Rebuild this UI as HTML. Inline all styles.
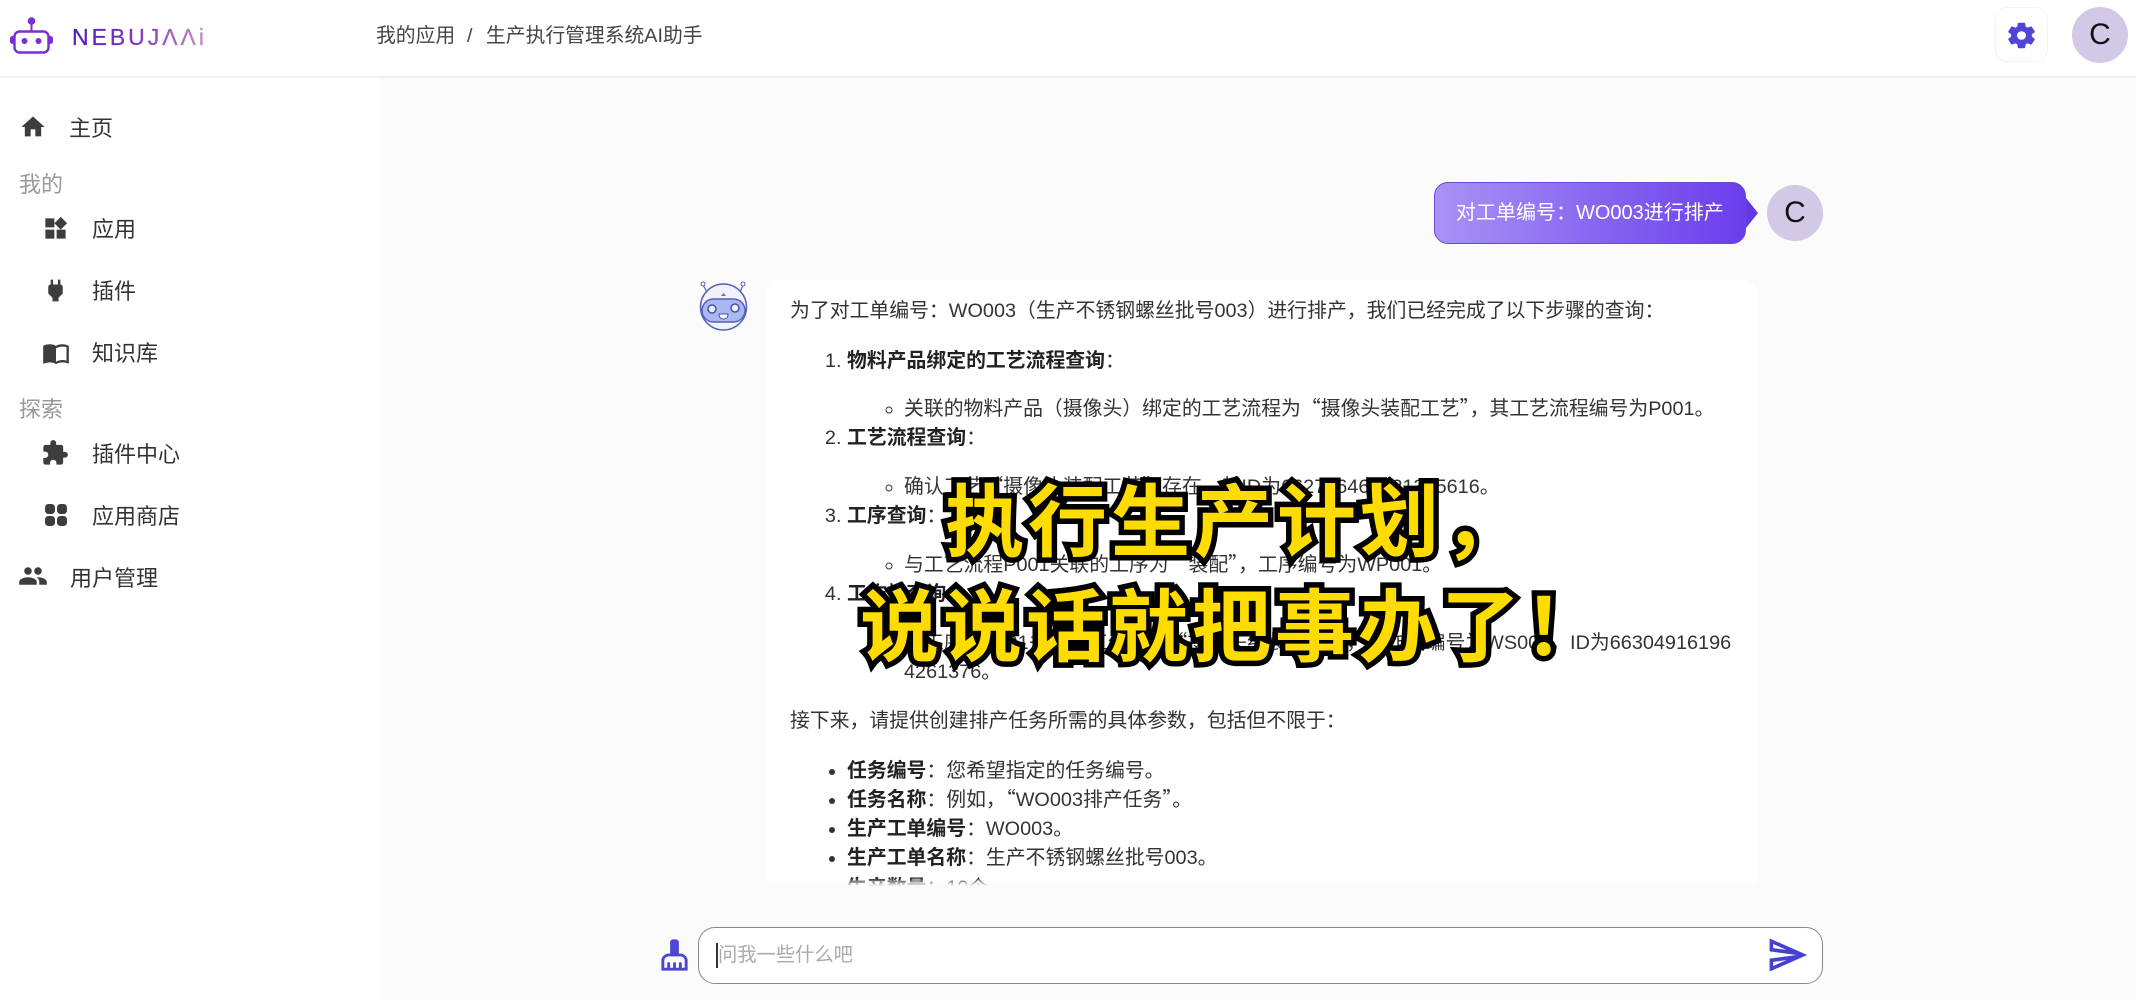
<!DOCTYPE html>
<html lang="zh-CN"><head><meta charset="utf-8"><title>生产执行管理系统AI助手</title>
<style>
*{box-sizing:border-box}
html,body{margin:0;width:2136px;height:1000px;overflow:hidden;background:#fff;font-family:"Liberation Sans","Noto Sans CJK SC",sans-serif;color:#333}
.abs{position:absolute}
#main{position:absolute;left:380px;top:77px;width:1756px;height:923px;background:#fbfbfb}
header{position:absolute;left:0;top:0;width:2136px;height:78px;background:#fff;border-bottom:2px solid #f0f0f0}
.crumb{position:absolute;top:21px;font-size:19.8px;line-height:30px;color:#444;white-space:nowrap}
.nav{position:absolute;font-size:22px;line-height:32px;color:#333;white-space:nowrap}
.cap{color:#999}
.ic{position:absolute;fill:#3d3d3d}
.set{position:absolute;left:1995px;top:7px;width:53px;height:55px;background:#fff;border:1px solid #f3f3f3;border-radius:12px}
.av{position:absolute;width:56px;height:56px;border-radius:50%;background:#d1c9e5;color:#111;font-size:30px;line-height:56px;text-align:center}
.bubble{position:absolute;left:1434px;top:182px;width:312px;height:62px;border-radius:14px;background:linear-gradient(90deg,#a893f6,#6a3deb);border:1px solid #6a4bd0;color:#fff;font-size:20px;line-height:60px;padding-left:21px;white-space:nowrap}
.tip{position:absolute;left:1746px;top:198px;width:0;height:0;border-left:12px solid #6238e0;border-top:15px solid transparent;border-bottom:15px solid transparent}
.card{position:absolute;left:766px;top:280px;width:991px;height:640px;background:#fff;border-radius:14px 14px 0 0;overflow:hidden;padding:17px 15px 0 24px;font-size:19.85px;line-height:29.3px;color:#333}
.card p{margin:0 0 20.4px}
.card ol,.card ul{margin:0;padding-left:57px}
.card ol{margin-bottom:19.8px}
.card ol ul{margin:19.2px 0 0;list-style:circle}
.card>ul{list-style:disc}
.card strong{font-weight:700;color:#222}
.q{font-family:"Noto Sans CJK SC",sans-serif;line-height:0}
.fade{position:absolute;left:380px;top:878px;width:1756px;height:122px;background:linear-gradient(#fbfbfb00,#fbfbfb 8px)}
.input{position:absolute;left:698px;top:927px;width:1125px;height:57px;background:#fff;border:1.5px solid #888;border-radius:17px}
.ph{position:absolute;left:718px;top:941px;font-size:19.3px;line-height:30px;color:#aaa;white-space:nowrap}
.caret{position:absolute;left:716px;top:943px;width:2px;height:25px;background:#333}
.sub{position:absolute;white-space:nowrap;font-family:"Noto Sans CJK SC",sans-serif;font-weight:700;color:#ffdc00;-webkit-text-stroke:11px #000;paint-order:stroke fill;font-size:79px;line-height:90px;letter-spacing:4px}
</style></head><body>
<div id="main"></div>
<header>
<svg class="abs" style="left:9px;top:16px" width="46" height="38" viewBox="0 0 46 38"><g fill="#7a2fd2"><circle cx="22.500" cy="5" r="3.800"/><rect x="21.500" y="6" width="2" height="10"/><rect x="1" y="20" width="5" height="8" rx="2.500"/><rect x="39" y="20" width="5" height="8" rx="2.500"/><circle cx="15.500" cy="25" r="3"/><circle cx="29.500" cy="25" r="3"/></g><rect x="5.500" y="15.500" width="34" height="21" rx="5" fill="none" stroke="#7a2fd2" stroke-width="2.400"/></svg>
<svg class="abs" style="left:70px;top:24px" width="140" height="28" viewBox="0 0 140 28"><defs><linearGradient id="lg"><stop offset="0" stop-color="#4b1fc0"/><stop offset=".55" stop-color="#8a3bc0"/><stop offset="1" stop-color="#c58abf"/></linearGradient></defs><text x="2" y="21" font-family="Liberation Sans" font-size="23" fill="url(#lg)" stroke="url(#lg)" stroke-width=".25" textLength="132" lengthAdjust="spacing">NEBUJΛΛi</text></svg>
<div class="crumb" style="left:376px">我的应用</div><div class="crumb" style="left:467px">/</div><div class="crumb" style="left:486px">生产执行管理系统AI助手</div>
<div class="set"></div>
<svg class="abs" style="left:2004.500px;top:19.500px" width="33" height="31" viewBox="0 0 24 24" preserveAspectRatio="none" fill="#4f46d8" stroke="#4f46d8" stroke-width=".6"><path d="M19.14 12.94c.04-.3.06-.61.06-.94 0-.32-.02-.64-.07-.94l2.03-1.58c.18-.14.23-.41.12-.61l-1.92-3.32c-.12-.22-.37-.29-.59-.22l-2.39.96c-.5-.38-1.03-.7-1.62-.94l-.36-2.54c-.04-.24-.24-.41-.48-.41h-3.84c-.24 0-.43.17-.47.41l-.36 2.54c-.59.24-1.13.57-1.62.94l-2.39-.96c-.22-.08-.47 0-.59.22L2.74 8.87c-.12.21-.08.47.12.61l2.03 1.58c-.05.3-.09.63-.09.94s.02.64.07.94l-2.03 1.58c-.18.14-.23.41-.12.61l1.92 3.32c.12.22.37.29.59.22l2.39-.96c.5.38 1.03.7 1.62.94l.36 2.54c.05.24.24.41.48.41h3.84c.24 0 .44-.17.47-.41l.36-2.54c.59-.24 1.13-.56 1.62-.94l2.39.96c.22.08.47 0 .59-.22l1.92-3.32c.12-.22.07-.47-.12-.61l-2.01-1.58zM12 15.6c-1.98 0-3.6-1.62-3.6-3.6s1.62-3.6 3.6-3.6 3.6 1.62 3.6 3.6-1.62 3.6-3.6 3.6z"/></svg>
<div class="av" style="left:2072px;top:7px">C</div>
</header>

<svg class="ic" style="left:19px;top:113px" width="28" height="28" viewBox="0 0 24 24"><path d="M10 20v-6h4v6h5v-8h3L12 3 2 12h3v8z"/></svg>
<div class="nav" style="left:69px;top:113px">主页</div>
<div class="nav cap" style="left:19px;top:169px">我的</div>
<svg class="ic" style="left:42px;top:215px" width="27" height="27" viewBox="0 0 24 24"><path d="M13 13v8h8v-8h-8zM3 21h8v-8H3v8zM3 3v8h8V3H3zm13.66-1.31L11 7.34 16.66 13l5.66-5.66-5.66-5.65z"/></svg>
<div class="nav" style="left:92px;top:214px">应用</div>
<svg class="ic" style="left:39px;top:276px" width="33" height="29" viewBox="0 0 24 24"><path d="M16.010 7L16 3h-2v4h-4V3H8v4h-.01C7 6.990 6 7.990 6 8.990v5.490L9.500 18v3h5v-3l3.500-3.510v-5.500c0-1-1-2-1.990-1.990z"/></svg>
<div class="nav" style="left:92px;top:276px">插件</div>
<svg class="ic" style="left:42px;top:339px" width="28" height="28" viewBox="0 0 24 24"><path d="M21 5c-1.110-.35-2.330-.5-3.500-.5-1.950 0-4.050.4-5.500 1.500-1.450-1.100-3.550-1.500-5.500-1.500S2.450 4.900 1 6v14.650c0 .25.25.5.5.5.1 0 .15-.05.25-.05C3.100 20.450 5.050 20 6.500 20c1.950 0 4.050.4 5.500 1.500 1.350-.85 3.800-1.500 5.500-1.500 1.650 0 3.350.3 4.750 1.050.1.05.15.05.25.05.25 0 .5-.25.5-.5V6c-.6-.45-1.250-.75-2-1zm0 13.500c-1.100-.35-2.300-.5-3.500-.5-1.700 0-4.150.65-5.500 1.500V8c1.350-.85 3.800-1.500 5.500-1.500 1.200 0 2.400.15 3.500.5v11.500z"/></svg>
<div class="nav" style="left:92px;top:338px">知识库</div>
<div class="nav cap" style="left:19px;top:394px">探索</div>
<svg class="ic" style="left:41px;top:439px" width="28" height="28" viewBox="0 0 24 24"><path d="M20.500 11H19V7c0-1.100-.9-2-2-2h-4V3.500C13 2.120 11.880 1 10.500 1S8 2.120 8 3.500V5H4c-1.100 0-1.990.9-1.990 2v3.800H3.500c1.490 0 2.700 1.210 2.700 2.700s-1.210 2.700-2.700 2.700H2V20c0 1.100.9 2 2 2h3.800v-1.500c0-1.490 1.210-2.700 2.700-2.700 1.490 0 2.700 1.210 2.700 2.700V22H17c1.100 0 2-.9 2-2v-4h1.500c1.380 0 2.500-1.120 2.500-2.500S21.880 11 20.500 11z"/></svg>
<div class="nav" style="left:92px;top:439px">插件中心</div>
<svg class="ic" style="left:45px;top:504px" width="22" height="22" viewBox="0 0 22 22"><rect width="10" height="10" rx="3.500"/><rect x="12" width="10" height="10" rx="3.500"/><rect y="12" width="10" height="10" rx="3.500"/><rect x="12" y="12" width="10" height="10" rx="3.500"/></svg>
<div class="nav" style="left:92px;top:501px">应用商店</div>
<svg class="ic" style="left:18px;top:561px" width="30" height="30" viewBox="0 0 24 24"><path d="M16 11c1.660 0 2.990-1.340 2.990-3S17.660 5 16 5c-1.660 0-3 1.340-3 3s1.340 3 3 3zm-8 0c1.660 0 2.990-1.340 2.990-3S9.660 5 8 5C6.340 5 5 6.340 5 8s1.340 3 3 3zm0 2c-2.330 0-7 1.170-7 3.500V19h14v-2.500c0-2.330-4.670-3.500-7-3.500zm8 0c-.29 0-.62.02-.97.05 1.160.84 1.970 1.970 1.970 3.450V19h6v-2.500c0-2.330-4.670-3.500-7-3.500z"/></svg>
<div class="nav" style="left:70px;top:563px">用户管理</div>

<div class="bubble">对工单编号：WO003进行排产</div><div class="tip"></div>
<div class="av" style="left:1767px;top:185px">C</div>

<svg class="abs" style="left:696px;top:279px" width="56" height="56" viewBox="0 0 56 56"><circle cx="27.500" cy="28" r="23" fill="#f0f2fc" stroke="#5a60b5" stroke-width="1.500"/><path d="M11 13L7 6M44 13l3-7" stroke="#5a60b5" stroke-width="1.200" fill="none"/><circle cx="7" cy="5" r="2" fill="#fff" stroke="#5a60b5"/><circle cx="47" cy="5" r="2" fill="#fff" stroke="#5a60b5"/><rect x="6" y="20" width="43" height="23" rx="11.500" fill="#a9b8f0" stroke="#5a60b5" stroke-width="1.500"/><circle cx="16" cy="30" r="4" fill="#f0f3fd" stroke="#4a50a8" stroke-width="1.500"/><circle cx="39" cy="29" r="4" fill="#f0f3fd" stroke="#4a50a8" stroke-width="1.500"/><path d="M23 35h9c0 3.500-2 5-4.500 5s-4.500-1.500-4.500-5z" fill="#fff" stroke="#4a50a8"/><path d="M25 17l2.500-3 2.500 3z" fill="#6a70c0"/></svg>

<div class="card">
<p>为了对工单编号：WO003（生产不锈钢螺丝批号003）进行排产，我们已经完成了以下步骤的查询：</p>
<ol>
<li><strong>物料产品绑定的工艺流程查询</strong>：<ul><li>关联的物料产品（摄像头）绑定的工艺流程为<span class="q">“</span>摄像头装配工艺<span class="q">”</span>，其工艺流程编号为P001。</li></ul></li>
<li><strong>工艺流程查询</strong>：<ul><li>确认工艺<span class="q">“</span>摄像头装配工艺<span class="q">”</span>存在，其ID为662736464321325616。</li></ul></li>
<li><strong>工序查询</strong>：<ul><li>与工艺流程P001关联的工序为<span class="q">“</span>装配<span class="q">”</span>，工序编号为WP001。</li></ul></li>
<li><strong>工作站查询</strong>：<ul><li>与工序WP001关联的工作站为<span class="q">“</span>摄像头组装工位<span class="q">”</span><span style="margin-left:10px">，</span>工作站编号为WS001，ID为66304916196<br>4261376。</li></ul></li>
</ol>
<p>接下来，请提供创建排产任务所需的具体参数，包括但不限于：</p>
<ul>
<li><strong>任务编号</strong>：您希望指定的任务编号。</li>
<li><strong>任务名称</strong>：例如，<span class="q">“</span>WO003排产任务<span class="q">”</span>。</li>
<li><strong>生产工单编号</strong>：WO003。</li>
<li><strong>生产工单名称</strong>：生产不锈钢螺丝批号003。</li>
<li><strong>生产数量</strong>：10个。</li>
</ul>
</div>
<div class="fade"></div>

<svg class="abs" style="left:657px;top:938px" width="35" height="34" viewBox="0 0 24 24" preserveAspectRatio="none" fill="#4f46d8"><path d="M16 11h-1V3c0-1.100-.9-2-2-2h-2C9.900 1 9 1.900 9 3v8H8c-2.760 0-5 2.240-5 5v7h18v-7c0-2.760-2.240-5-5-5zm3 10h-2v-3c0-.55-.45-1-1-1s-1 .45-1 1v3h-2v-3c0-.55-.45-1-1-1s-1 .45-1 1v3H9v-3c0-.55-.45-1-1-1s-1 .45-1 1v3H5v-5c0-1.650 1.350-3 3-3h8c1.650 0 3 1.350 3 3v5z"/></svg>
<div class="input"></div><div class="caret"></div><div class="ph">问我一些什么吧</div>
<svg class="abs" style="left:1766px;top:933px" width="43" height="44" viewBox="0 0 24 24" preserveAspectRatio="none" fill="#4640d0"><path d="M4.010 6.030l7.510 3.220-7.520-1 .01-2.220m7.500 8.720L4 17.970v-2.220l7.510-1M2.010 3L2 10l15 2-15 2 .01 7L23 12 2.010 3z"/></svg>

<div class="sub" style="left:945px;top:471px">执行生产计划，</div>
<div class="sub" style="left:860px;top:576px">说说话就把事办了！</div>
</body></html>
